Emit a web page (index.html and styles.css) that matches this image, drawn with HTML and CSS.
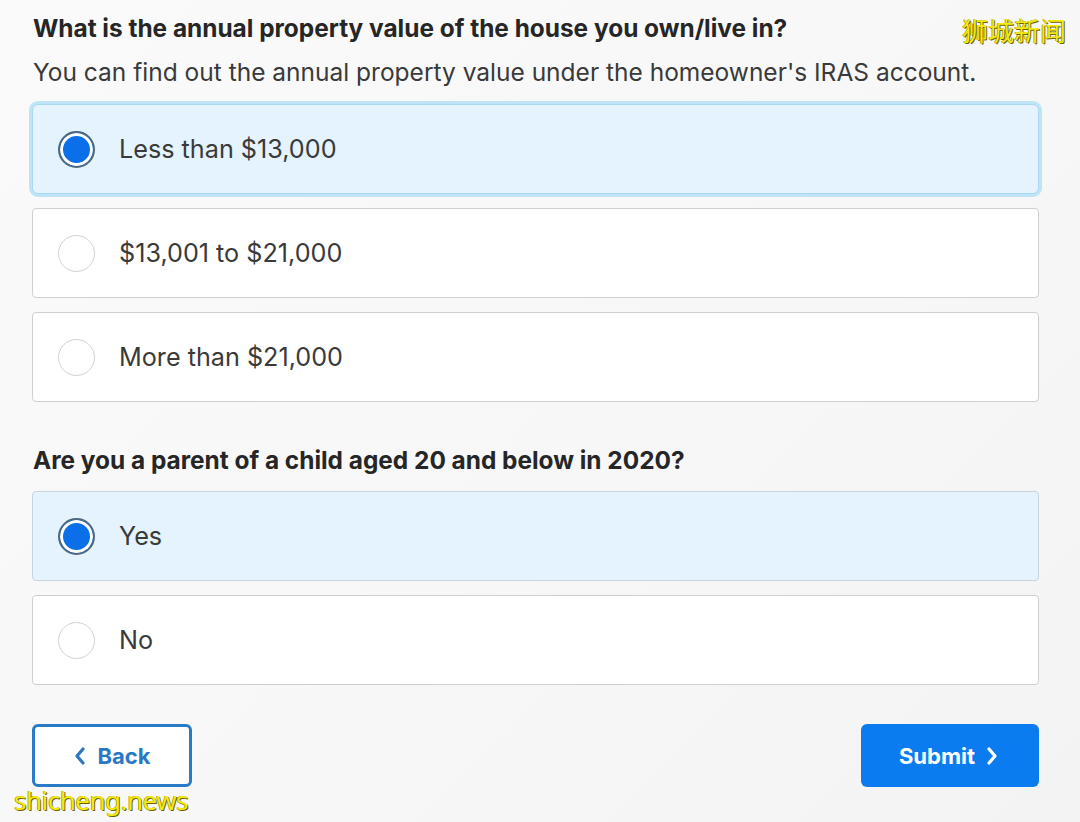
FILE: index.html
```html
<!DOCTYPE html>
<html lang="en">
<head>
<meta charset="utf-8">
<title>Property value</title>
<link rel="stylesheet" href="styles.css">
</head>
<body>
<main class="page">
  <h2 class="question">What is the annual property value of the house you own/live in?</h2>
  <p class="hint">You can find out the annual property value under the homeowner's IRAS account.</p>
  <div class="options">
    <div class="option selected focused"><span class="radio on"></span><span class="label">Less than $13,000</span></div>
    <div class="option"><span class="radio"></span><span class="label">$13,001 to $21,000</span></div>
    <div class="option"><span class="radio"></span><span class="label">More than $21,000</span></div>
  </div>
  <h2 class="question q2">Are you a parent of a child aged 20 and below in 2020?</h2>
  <div class="options options2">
    <div class="option selected"><span class="radio on"></span><span class="label">Yes</span></div>
    <div class="option"><span class="radio"></span><span class="label">No</span></div>
  </div>
  <div class="actions">
    <button class="btn back"><svg class="chev" width="14" height="20" viewBox="0 0 14 20"><polyline points="10,3 4,10 10,17" fill="none" stroke="currentColor" stroke-width="3.2" stroke-linecap="round" stroke-linejoin="round"/></svg>Back</button>
    <button class="btn submit">Submit<svg class="chev" width="14" height="20" viewBox="0 0 14 20"><polyline points="4,3 10,10 4,17" fill="none" stroke="currentColor" stroke-width="3.2" stroke-linecap="round" stroke-linejoin="round"/></svg></button>
  </div>
</main>
<div class="wm wm-cn">狮城新闻</div>
<div class="wm wm-en">shicheng.news</div>
</body>
</html>
```
FILE: styles.css
```css
html, body {
  margin: 0;
  padding: 0;
}
body {
  width: 1080px;
  height: 822px;
  overflow: hidden;
  background: linear-gradient(135deg, #fafafa 0%, #f7f7f8 60%, #f3f3f4 100%);
  font-family: Inter, "Noto Sans", sans-serif;
  color: #333;
  position: relative;
}
.page {
  padding: 13px 41px 0 32px;
}
.question {
  margin: 0;
  font-size: 24.4px;
  line-height: 30px;
  font-weight: 700;
  color: #262626;
  padding-left: 1px;
  white-space: nowrap;
}
.hint {
  margin: 14px 0 0;
  font-size: 24.5px;
  line-height: 30px;
  color: #3a3a3a;
  padding-left: 1px;
  white-space: nowrap;
}
.options {
  margin-top: 17px;
  display: flex;
  flex-direction: column;
  gap: 14px;
}
.option {
  height: 90px;
  box-sizing: border-box;
  border: 1px solid #cfcfcf;
  border-radius: 4px;
  background: #fff;
  display: flex;
  align-items: center;
  padding-left: 25px;
}
.option.selected {
  background: #e4f3fd;
  border-color: #c9d3da;
}
.option.focused {
  border-color: #a8d9f1;
  box-shadow: 0 0 0 3px #bfe4f6;
  border-radius: 6px;
}
.radio {
  width: 37px;
  height: 37px;
  box-sizing: border-box;
  border: 1.5px solid #d2d2d2;
  border-radius: 50%;
  background: #fff;
  flex: none;
}
.radio.on {
  border: 2px solid #4d6880;
  background: #0a6fe8;
  box-shadow: inset 0 0 0 3px #fff;
}
.label {
  margin-left: 24px;
  font-size: 25.2px;
  color: #3a3a3a;
  line-height: 30px;
}
.q2 {
  margin-top: 43px;
}
.options2 {
  margin-top: 16px;
}
.actions {
  margin-top: 39px;
  display: flex;
  justify-content: space-between;
}
.btn {
  height: 63px;
  box-sizing: border-box;
  border-radius: 6px;
  font-family: Inter, "Noto Sans", sans-serif;
  font-size: 22px;
  font-weight: 700;
  display: flex;
  align-items: center;
  justify-content: center;
  gap: 10px;
  cursor: pointer;
}
.back {
  width: 160px;
  background: #fff;
  border: 3px solid #2a7bc6;
  color: #2a78c4;
  padding-right: 6px;
}
.submit {
  width: 178px;
  background: #0b7bf0;
  border: none;
  color: #fff;
  padding-left: 4px;
}
.chev {
  display: block;
}
.wm {
  position: absolute;
  color: #f4ea12;
  text-shadow: 1px 1px 0 #6b6200, -0.5px -0.5px 0 #8a8000;
  white-space: nowrap;
}
.wm-cn {
  top: 13px;
  left: 962px;
  font-family: "Noto Sans CJK SC", sans-serif;
  font-size: 26px;
  line-height: 34px;
  letter-spacing: 0;
}
.wm-en {
  top: 783px;
  left: 14px;
  font-family: "Noto Sans", sans-serif;
  font-size: 26px;
  line-height: 34px;
  letter-spacing: -0.5px;
}
```
